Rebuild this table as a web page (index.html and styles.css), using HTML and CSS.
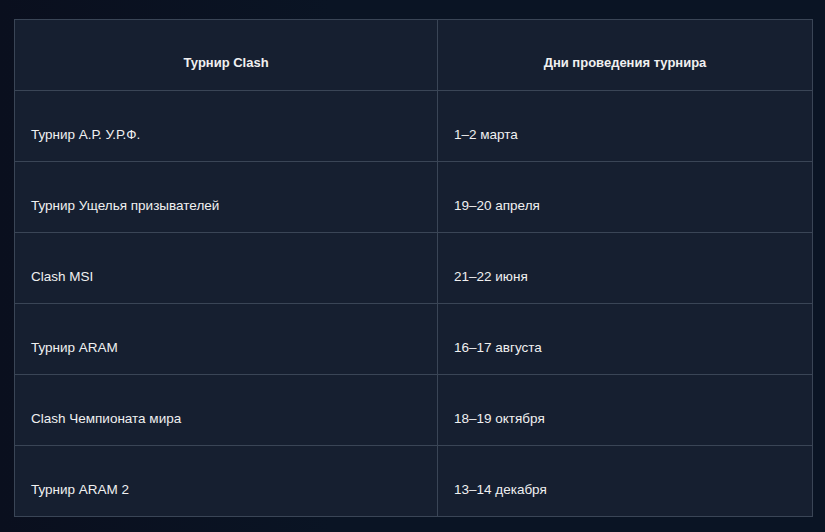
FILE: index.html
```html
<!DOCTYPE html>
<html lang="ru">
<head>
<meta charset="utf-8">
<link rel="stylesheet" href="styles.css">
</head>
<body>
<table class="schedule">
  <thead>
    <tr><th class="col-a">Турнир Clash</th><th class="col-b">Дни проведения турнира</th></tr>
  </thead>
  <tbody>
    <tr><td>Турнир А.Р. У.Р.Ф.</td><td>1–2 марта</td></tr>
    <tr><td>Турнир Ущелья призывателей</td><td>19–20 апреля</td></tr>
    <tr><td>Clash MSI</td><td>21–22 июня</td></tr>
    <tr><td>Турнир ARAM</td><td>16–17 августа</td></tr>
    <tr><td>Clash Чемпионата мира</td><td>18–19 октября</td></tr>
    <tr><td>Турнир ARAM 2</td><td>13–14 декабря</td></tr>
  </tbody>
</table>
</body>
</html>
```

FILE: styles.css
```css
html, body {
  margin: 0;
  height: 100%;
}
body {
  background: linear-gradient(90deg, #0a0f1e 0%, #0a1424 40%, #0a1424 100%);
  padding: 19px 0 0 14px;
  box-sizing: border-box;
  font-family: "Liberation Sans", Arial, sans-serif;
  font-size: 13px;
  color: #f0f0f0;
}
.schedule {
  border-collapse: collapse;
  width: 798px;
  background: #161f30;
  table-layout: fixed;
}
.schedule th,
.schedule td {
  border: 1px solid #3a4556;
  height: 70px;
  box-sizing: border-box;
  padding: 33px 16px 17px 16px;
  line-height: 20px;
  text-align: left;
  vertical-align: top;
}
.schedule td {
  font-size: 13.5px;
  padding-top: 34px;
  padding-bottom: 16px;
}
.schedule th {
  font-weight: bold;
  text-align: center;
}
.col-a { width: 423px; }
.col-b { width: 375px; }
```
